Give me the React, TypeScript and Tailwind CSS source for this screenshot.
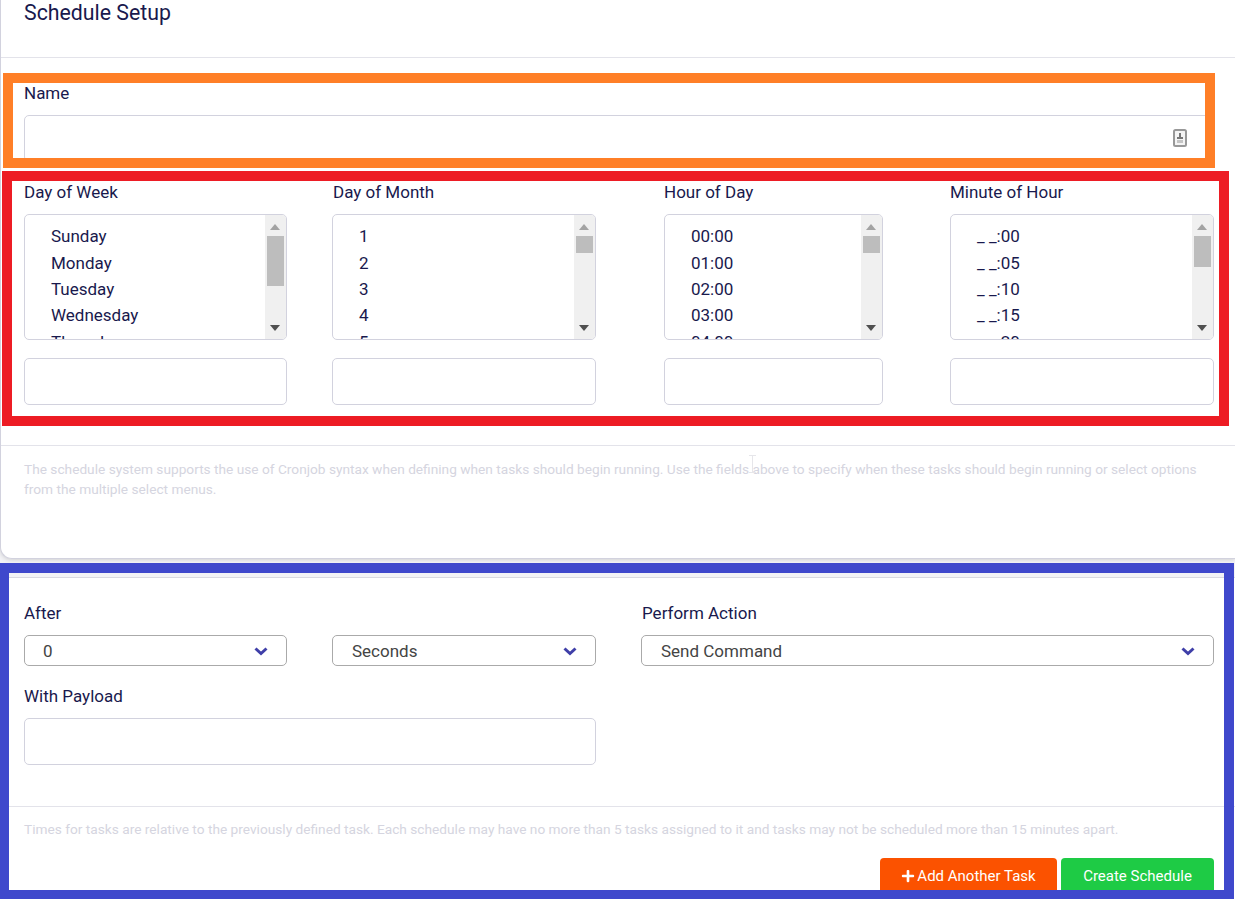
import { FaPlus } from "react-icons/fa";

const labelClass = "block text-[17px] leading-5 text-[#19194d]";
const inputClass = "block h-[47px] w-full rounded-[5px] border border-[#d2d2de] bg-white";

interface ScheduleListProps {
  label: string;
  items: string[];
  width: string;
  thumb: string;
  labelInset?: string;
}

function ScheduleList({ label, items, width, thumb, labelInset = "" }: ScheduleListProps) {
  return (
    <div className={width}>
      <label className={`${labelClass} ${labelInset}`}>{label}</label>
      <div className="mt-3 flex h-[126px] overflow-hidden rounded-[5px] border border-[#d2d2de] bg-white">
        <ul className="min-w-0 flex-1 overflow-hidden pt-[8.4px] pl-[26px] text-[17px] text-[#19194d]">
          {items.map((item) => (
            <li key={item} className="h-[26.3px] leading-[26px] whitespace-pre">
              {item}
            </li>
          ))}
        </ul>
        <div className="flex w-[21px] shrink-0 flex-col items-center bg-[#f0f0f0] pr-[1px]">
          <div className="flex h-[21px] shrink-0 items-center justify-center pt-[2px]">
            <svg width="10" height="6" viewBox="0 0 10 6">
              <path d="M5 0 L10 6 L0 6 Z" fill="#a3a3a3" />
            </svg>
          </div>
          <div className={`w-[17px] bg-[#bdbdbd] ${thumb}`} />
          <div className="mt-auto flex h-[21px] shrink-0 items-center justify-center pb-[2px]">
            <svg width="10" height="6" viewBox="0 0 10 6">
              <path d="M0 0 L10 0 L5 6 Z" fill="#505050" />
            </svg>
          </div>
        </div>
      </div>
      <input className={`mt-[18px] ${inputClass}`} />
    </div>
  );
}

function SelectBox({ value, width }: { value: string; width: string }) {
  return (
    <div className={`flex h-[31px] items-center justify-between rounded-[5px] border border-[#aaaaaa] pr-[18px] pl-[18px] ${width}`}>
      <span className="pt-[2px] text-[17px] text-[#444444]">{value}</span>
      <svg width="14" height="9" viewBox="0 0 14 9" className="mt-[1px]">
        <path d="M1.5 1.5 L7 6.5 L12.5 1.5" fill="none" stroke="#3f3fa8" strokeWidth="3" />
      </svg>
    </div>
  );
}

const days = ["Sunday", "Monday", "Tuesday", "Wednesday", "Thursday"];
const dates = ["1", "2", "3", "4", "5"];
const hours = ["00:00", "01:00", "02:00", "03:00", "04:00"];
const minutes = ["_ _:00", "_ _:05", "_ _:10", "_ _:15", "_ _:20"];

export default function App() {
  return (
    <div className="relative h-[899px] w-[1235px] overflow-hidden bg-[#f3f3f6] font-['Roboto',sans-serif]">
      {/* schedule card */}
      <div className="h-[559px] rounded-bl-[12px] border-b border-l border-[#d2d2de] bg-white shadow-[0_1px_4px_rgba(0,0,0,0.15)]">
        <div className="h-[58px] border-b border-[#e3e3ea] pl-[23px]">
          <h2 className="text-[21.3px] leading-[26px] text-[#19194d]">Schedule Setup</h2>
        </div>

        <div className="pt-[25px] pr-5 pl-[23px]">
          <label className={labelClass}>Name</label>
          <div className="relative mt-3">
            <input className={inputClass} />
            <svg className="absolute top-[14px] right-[28px]" width="14" height="18" viewBox="0 0 14 18">
              <rect x="1" y="1" width="12" height="16" rx="1.5" fill="#f4f4f4" stroke="#989898" strokeWidth="2" />
              <rect x="6" y="4" width="2" height="4" fill="#777777" />
              <rect x="4" y="8" width="6" height="2" fill="#777777" />
              <rect x="4" y="11" width="6" height="3" fill="#c4c4c4" />
            </svg>
          </div>
        </div>

        <div className="mt-[20px] flex gap-[45px] pl-[23px]">
          <ScheduleList label="Day of Week" items={days} width="w-[263px]" thumb="h-[50px]" />
          <ScheduleList label="Day of Month" items={dates} width="w-[264px]" thumb="h-[17px]" labelInset="pl-px" />
          <ScheduleList label="Hour of Day" items={hours} width="ml-[23px] w-[219px]" thumb="h-[17px]" />
          <ScheduleList label="Minute of Hour" items={minutes} width="ml-[22px] w-[264px]" thumb="h-[31px]" />
        </div>

        <div className="mt-10 border-t border-[#e3e3ea] pt-[13px] pr-[30px] pl-[23px] text-[13.7px] leading-5 text-[#d5d5e0]">
          The schedule system supports the use of Cronjob syntax when defining when tasks should begin running. Use the fields above to specify when these tasks should begin running or select options from the multiple select menus.
        </div>
      </div>

      {/* task section */}
      <div className="mt-[18px] h-[322px] border-t border-[#d9d9e2] bg-white pt-[25px]">
        <div className="flex gap-[45px] pr-[21px] pl-6">
          <div>
            <label className={labelClass}>After</label>
            <div className="mt-3 flex gap-[45px]">
              <SelectBox value="0" width="w-[263px]" />
              <SelectBox value="Seconds" width="w-[264px] pl-[19px]" />
            </div>
          </div>
          <div className="flex-1">
            <label className={`${labelClass} pl-px`}>Perform Action</label>
            <div className="mt-3">
              <SelectBox value="Send Command" width="w-full pl-[19px]" />
            </div>
          </div>
        </div>

        <div className="mt-5 w-[596px] pl-6">
          <label className={labelClass}>With Payload</label>
          <input className={`mt-3 ${inputClass}`} />
        </div>

        <div className="mt-[41px] border-t border-[#e3e3ea] pt-3 pl-6 text-[13.7px] leading-5 text-[#d5d5e0]">
          Times for tasks are relative to the previously defined task. Each schedule may have no more than 5 tasks assigned to it and tasks may not be scheduled more than 15 minutes apart.
        </div>

        <div className="mt-[19px] flex justify-end gap-1 pr-[21px]">
          <button className="flex h-9 w-[177px] items-center justify-center gap-[2px] rounded bg-[#fb5200] text-[15px] text-white">
            <FaPlus className="h-[14px] w-[14px]" />
            Add Another Task
          </button>
          <button className="h-9 w-[153px] rounded bg-[#1ecb45] text-[15px] text-white">Create Schedule</button>
        </div>
      </div>

      {/* text cursor caught in the capture */}
      <svg className="pointer-events-none absolute top-[455px] left-[749px]" width="7" height="18" viewBox="0 0 7 18">
        <path d="M0 0.5 H7 M3.5 0.5 V17.5 M0 17.5 H7" fill="none" stroke="#e6e6ea" />
      </svg>

      {/* paint annotations over the form */}
      <div className="pointer-events-none absolute top-[73px] left-[3px] h-[95px] w-[1212px] border-[10px] border-[#ff7f27]" />
      <div className="pointer-events-none absolute top-[171px] left-[2px] h-[255px] w-[1227px] border-[10px] border-[#ed1c24]" />
      <div className="pointer-events-none absolute top-[563px] left-0 h-[336px] w-[1234px] border-t-[10px] border-r-[10px] border-b-[9px] border-l-[9px] border-[#3f48cc]" />
    </div>
  );
}
